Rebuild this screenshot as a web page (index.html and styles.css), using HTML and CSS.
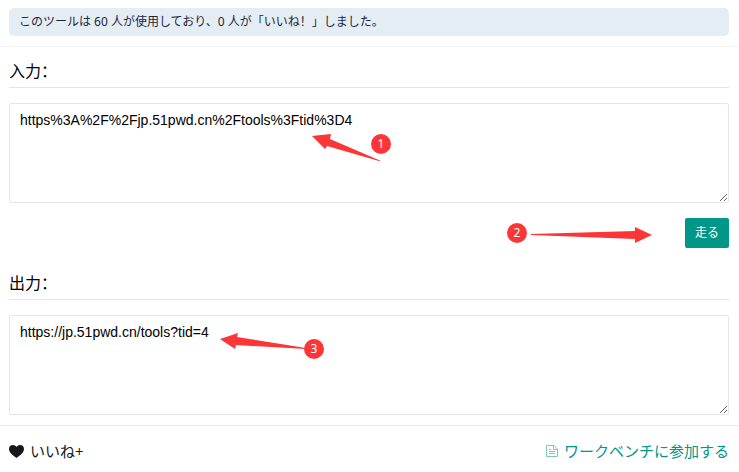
FILE: index.html
```html
<!DOCTYPE html>
<html lang="zh-CN">
<head>
  <meta charset="UTF-8" />
  <meta name="viewport" content="width=device-width, initial-scale=1.0" />
  <title>URL デコード</title>
  <link rel="stylesheet" href="styles.css">
</head>
<body>
  <header class="top">
    <p class="notice">このツールは 60 人が使用しており、0 人が「いいね！」しました。</p>
  </header>

  <form class="tool" id="toolForm">
    <div class="field">
      <label class="title" for="input">入力：</label>
      <textarea id="input" name="input" spellcheck="false">https%3A%2F%2Fjp.51pwd.cn%2Ftools%3Ftid%3D4</textarea>
      <svg class="arrow arrow-1" width="70" height="30" viewBox="0 0 70 30" aria-hidden="true">
        <path d="M0 4 L19 2 L18 7 L69 29 L67 29 L15 14 L13 17 Z" />
      </svg>
      <span class="step step-1">1</span>
    </div>

    <div class="actions">
      <span class="step step-2">2</span>
      <svg class="arrow arrow-2" width="122" height="16" viewBox="0 0 122 16" aria-hidden="true">
        <path d="M0 7 L104 4 L104 0 L121 8 L104 16 L104 12 L0 8 Z" />
      </svg>
      <button type="submit" class="run">走る</button>
    </div>

    <div class="field">
      <label class="title" for="output">出力：</label>
      <textarea id="output" name="output" spellcheck="false">https://jp.51pwd.cn/tools?tid=4</textarea>
      <svg class="arrow arrow-3" width="86" height="16" viewBox="0 0 86 16" aria-hidden="true">
        <path d="M0 6 L18 0 L17 4 L86 15 L86 16 L16 12 L15 16 Z" />
      </svg>
      <span class="step step-3">3</span>
    </div>
  </form>

  <footer class="bottom">
    <a href="#" class="like">
      <svg width="15" height="13" viewBox="0 0 15 13" aria-hidden="true">
        <path fill="currentColor" d="M7.5 13 C5.5 11.5 0 8.2 0 4 C0 1.6 1.7 0 3.9 0 C5.5 0 6.8 .8 7.5 2 C8.2 .8 9.5 0 11.1 0 C13.3 0 15 1.6 15 4 C15 8.2 9.5 11.5 7.5 13 Z" />
      </svg>
      いいね+
    </a>
    <a href="#" class="bench">
      <svg width="12" height="12" viewBox="0 0 12 12" fill="none" stroke="currentColor" aria-hidden="true">
        <path d="M.5 .5 H8 L11.5 4 V11.5 H.5 Z M7.5 .5 V4.5 H11.5 M3 4.5 H5 M3 6.5 H9 M3 8.5 H9" />
      </svg>
      ワークベンチに参加する
    </a>
  </footer>

  <script>
    document.getElementById('toolForm').addEventListener('submit', (e) => {
      e.preventDefault();
      const input = document.getElementById('input').value;

      try {
        document.getElementById('output').value = decodeURIComponent(input);
      } catch (err) {
        console.error(err);
      }
    });
  </script>
</body>
</html>
```
FILE: styles.css
```css
* {
  box-sizing: border-box;
}

body {
  margin: 0;
  background: #fff;
  color: #000;
  font-family: 'Noto Sans', 'Noto Sans CJK SC', sans-serif;
}

.top {
  padding: 8px 10px 10px 9px;
  border-bottom: 1px solid #f3f3f3;
}

.notice {
  margin: 0;
  padding: 4px 10px;
  border-radius: 5px;
  background: #e5edf4;
  color: #1c2540;
  font-size: 12px;
  line-height: 20px;
}

.tool {
  padding: 8px 10px 10px 9px;
}

.field {
  position: relative;
}

.title {
  display: block;
  margin-bottom: 15px;
  padding-bottom: 2px;
  border-bottom: 1px solid #e6e6e6;
  font-family: 'Noto Sans CJK SC', sans-serif;
  font-size: 16px;
  line-height: 30px;
}

textarea {
  display: block;
  width: 100%;
  height: 100px;
  padding: 6px 10px;
  border: 1px solid #e6e6e6;
  border-radius: 2px;
  background: #fff;
  color: #000;
  font-family: 'Liberation Sans', Arial, sans-serif;
  font-size: 14px;
  line-height: 20px;
  resize: vertical;
}

.actions {
  position: relative;
  display: flex;
  justify-content: flex-end;
  padding: 15px 0 19px;
}

.run {
  height: 30px;
  padding: 0 10px;
  border: none;
  border-radius: 2px;
  background: #009688;
  color: #fff;
  font-family: inherit;
  font-size: 12px;
  line-height: 30px;
  cursor: pointer;
}

.run:hover {
  opacity: 0.8;
}

/* numbered steps drawn over the form */
.step {
  position: absolute;
  width: 20px;
  height: 20px;
  border-radius: 50%;
  background: #fc3636;
  color: #fff;
  font-size: 12px;
  line-height: 20px;
  text-align: center;
}

.arrow {
  position: absolute;
  fill: #fc3636;
}

.step-1 {
  top: 79px;
  left: 362px;
}

.arrow-1 {
  top: 77px;
  left: 303px;
}

.step-2 {
  top: 20px;
  right: 202px;
}

.arrow-2 {
  top: 24px;
  right: 76px;
}

.step-3 {
  top: 72px;
  left: 295px;
}

.arrow-3 {
  top: 66px;
  left: 211px;
}

.bottom {
  display: flex;
  justify-content: space-between;
  padding: 13px 10px 8px 9px;
  border-top: 1px solid #e5edf4;
  font-size: 15px;
  line-height: 24px;
}

.bottom a {
  display: flex;
  align-items: center;
  gap: 6px;
  text-decoration: none;
}

.like {
  color: #16181c;
}

.bench {
  color: #009688;
}

.bench svg {
  opacity: 0.5;
}
```
